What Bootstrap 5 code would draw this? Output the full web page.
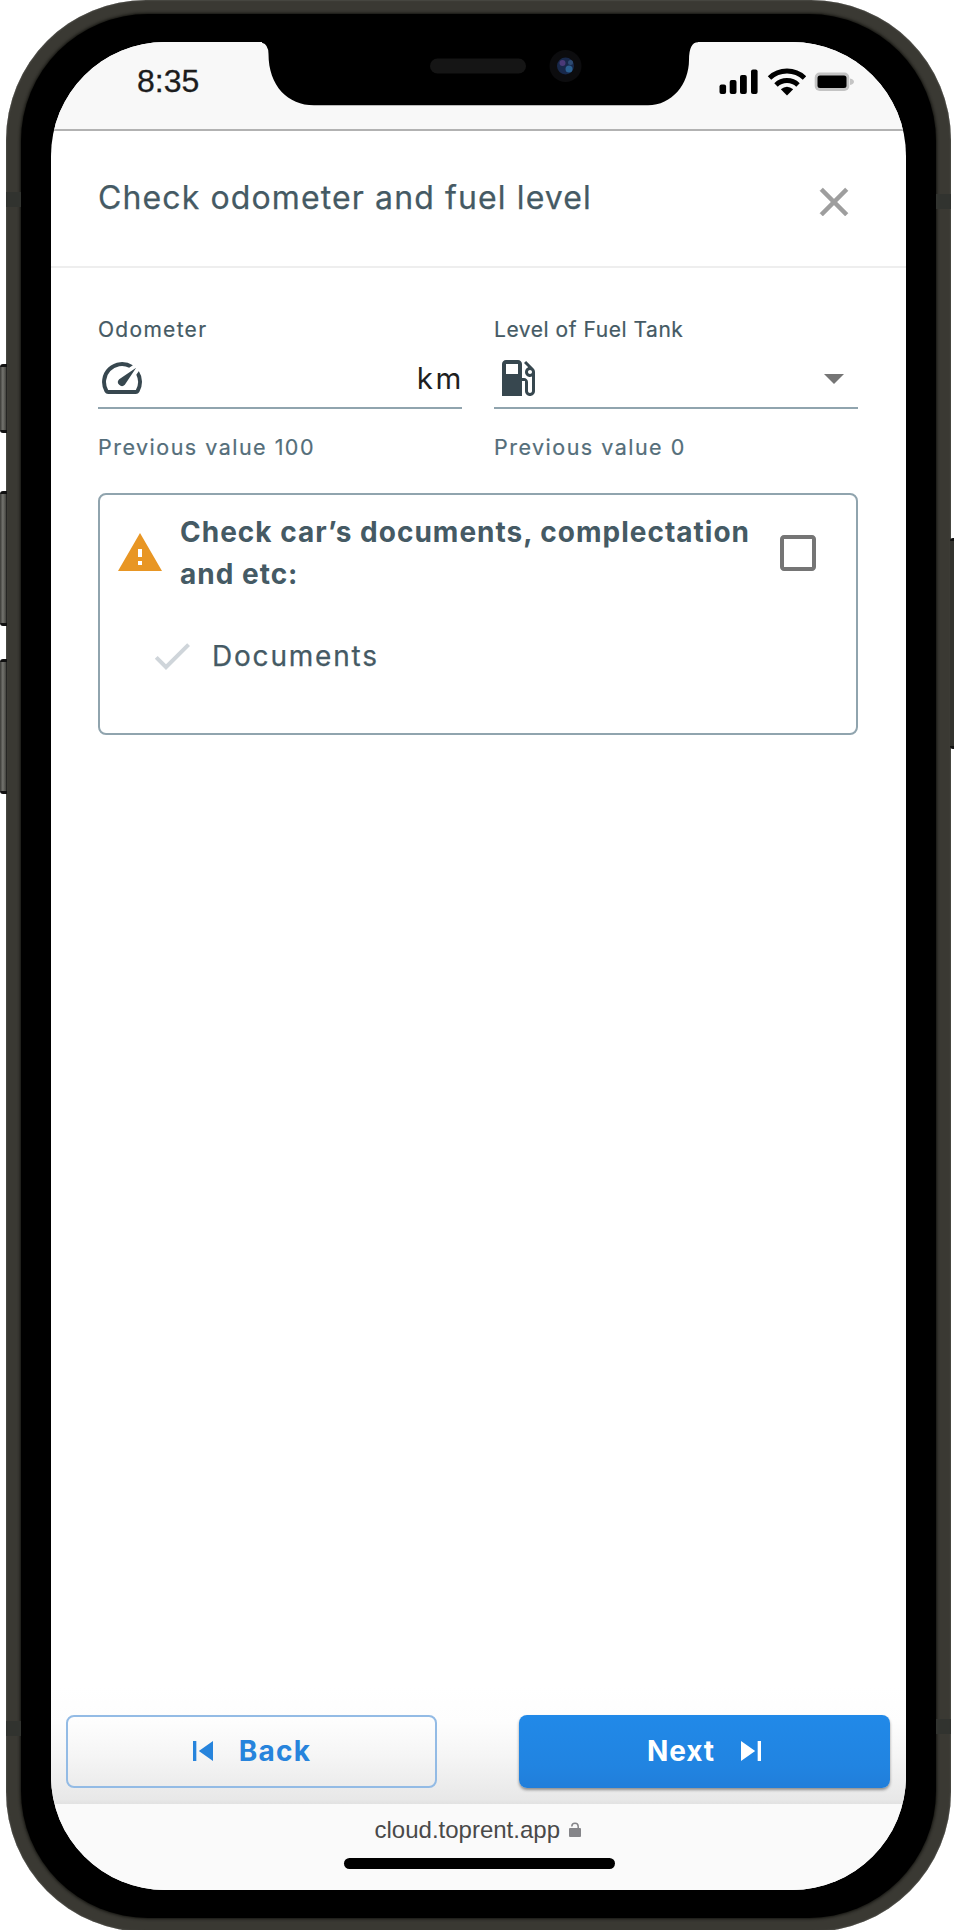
<!DOCTYPE html>
<html lang="en">
<head>
<meta charset="utf-8">
<meta name="viewport" content="width=device-width, initial-scale=1">
<title>Check odometer and fuel level</title>
<link href="https://cdn.jsdelivr.net/npm/bootstrap@5.3.0/dist/css/bootstrap.min.css" rel="stylesheet">
<style>
:root{--ink:#455a64;--line:#90a4ae;--blue:#2087e4}
body{font-family:Inter,"Open Sans",sans-serif;color:var(--ink);background:#fff;width:954px;height:1930px;overflow:hidden}
svg{display:block;flex:none}
.stage{width:954px;height:1930px}
/* phone body */
.phone{margin-left:6px;width:945px;height:1932px;border-radius:140px;background:#3a3933;padding:14px 15px;box-shadow:inset 0 0 2px #6d6d68}
.bezel{height:1904px;border-radius:127px;background:#000;padding:28px 30px 27px 29.5px;box-shadow:0 0 3px 1px #141410}
.screen{height:1847.5px;border-radius:114px;background:#fff;overflow:hidden}
.side-key{width:7px;background:linear-gradient(90deg,#3a3a36,#74746f 40%,#4a4a45 80%,#111);border-top:3px solid #111;border-bottom:3px solid #111;border-radius:3px 0 0 3px;left:0}
.key-mute{top:364px;height:69px}
.key-up{top:491px;height:135px}
.key-down{top:659px;height:135px}
.key-power{top:538px;height:211px;left:950px;width:6px;background:#33332e}
.seam{width:15px;height:15px;background:#31332f}
.notch{left:262px;top:40px}
/* status bar */
.status{height:89px;background:#f8f8f8;border-bottom:2px solid #b2b2b2;padding:21px 52.5px 0 86.5px}
.clock{font:400 32px/40px "Liberation Sans",Arial,sans-serif;color:#1c1c1c;margin-top:-2px;-webkit-text-stroke:.3px #1c1c1c}
/* dialog header */
.top{height:137px;border-bottom:2px solid #eee;padding:0 48px 0 47.5px}
.top h1{font-size:32px;line-height:40px;letter-spacing:1.12px;font-weight:400;margin-bottom:1px;-webkit-text-stroke:.25px currentColor}
.close-x{margin-top:7px;stroke:#9e9e9e;stroke-width:.3}
.content{padding:47px 48px 0 47.5px}
.pair{gap:32px}
.pair>div{flex:1 1 0}
.lbl{font-size:21px;line-height:30px;letter-spacing:1.3px;margin-bottom:-1px;-webkit-text-stroke:.2px currentColor}
.lbl-fuel{letter-spacing:.54px}
.field{height:65px;border-bottom:2px solid var(--line);padding-bottom:5px}
.unit{font-size:29.5px;line-height:40px;color:#1f1f1f;letter-spacing:2.6px;margin-right:-2px;margin-bottom:4px}
.hint{font-size:21.5px;line-height:30px;letter-spacing:1.48px;color:#546e7a;margin-top:23px;-webkit-text-stroke:.2px currentColor}
.panel{border:2px solid var(--line);border-radius:8px;height:242px;margin-top:31px;padding:16px 34px 0 16px}
.panel h2{font-size:28px;line-height:42px;font-weight:700;letter-spacing:1px;margin:0 0 0 16px;width:590px}
.docs{font-size:28px;line-height:40px;letter-spacing:1.8px;gap:16px;padding-left:32px;margin-top:37px;-webkit-text-stroke:.25px currentColor}
/* footer */
.actions{height:117px;padding:28px 16px 0 15.5px;background:linear-gradient(#fff 0,#fdfdfd 30%,#f5f5f5 60%,#e8e8e8 96%,#e2e2e2 100%)}
.act{width:371px;height:73px;border-radius:8px;border:2px solid transparent;font-size:28px;font-weight:700;padding:0 0 1px;gap:16px}
.act-back,.act-back:hover{border-color:#93bbe5;color:#2784dc;letter-spacing:1.2px;padding-right:9px}
.act-next,.act-next:hover{color:#fff;background:linear-gradient(#2189e8,#2184e1 70%,#217eda);border:0;box-shadow:0 2px 3px rgba(0,0,0,.4);letter-spacing:.9px;padding-left:9px}
.urlbar{background:#fafafa;height:86px;padding-top:10px}
.url{font:400 24px/32px "Liberation Sans",Arial,sans-serif;color:#494949;gap:8px}
.home{width:271px;height:11px;border-radius:6px;background:#000;margin-top:12px;margin-left:2px}
</style>
</head>
<body>
<div class="stage position-relative overflow-hidden">
  <i class="side-key key-mute position-absolute"></i>
  <i class="side-key key-up position-absolute"></i>
  <i class="side-key key-down position-absolute"></i>
  <i class="side-key key-power position-absolute"></i>
  <div class="phone">
    <div class="bezel">
      <main class="screen d-flex flex-column">
        <div class="status d-flex justify-content-between align-items-start flex-shrink-0">
          <span class="clock">8:35</span>
          <svg width="136" height="36" viewBox="0 0 136 36">
            <rect x="1.500" y="21.500" width="6.600" height="9.500" rx="2"/>
            <rect x="11.700" y="17" width="6.800" height="14" rx="2"/>
            <rect x="22" y="12" width="6.800" height="19" rx="2"/>
            <rect x="33" y="6.500" width="6.600" height="24.500" rx="2"/>
            <g fill="none" stroke="#000" stroke-width="5">
              <path d="M51.500 15a25.500 25.500 0 0 1 35 0"/>
              <path d="M58 22a16 16 0 0 1 22 0"/>
            </g>
            <path d="M62.800 26.300q6.200-5 12.400 0L69 32.600z"/>
            <rect x="96.700" y="9.500" width="34.600" height="18.500" rx="5" fill="#c4c4c4"/>
            <path d="M132 15.500q4 1 4 3.300t-4 3.200z" fill="#c4c4c4"/>
            <rect x="99.500" y="12.500" width="29" height="12.500" rx="2.500"/>
          </svg>
        </div>

        <header class="top d-flex justify-content-between align-items-center flex-shrink-0">
          <h1 class="text-nowrap">Check odometer and fuel level</h1>
          <svg class="close-x" width="48" height="48" viewBox="0 0 24 24" fill="#9e9e9e"><path d="M19 6.410 17.590 5 12 10.590 6.410 5 5 6.410 10.590 12 5 17.590 6.410 19 12 13.410 17.590 19 19 17.590 13.410 12z"/></svg>
        </header>

        <section class="content flex-grow-1">
          <div class="pair d-flex">
            <div>
              <div class="lbl">Odometer</div>
              <div class="field d-flex align-items-end justify-content-between">
                <svg width="48" height="48" viewBox="0 0 24 24" fill="#37474f"><path d="m20.380 8.570-1.230 1.850a8 8 0 0 1-.22 7.580H5.070A8 8 0 0 1 15.580 6.850l1.850-1.230A10 10 0 0 0 3.350 19a2 2 0 0 0 1.720 1h13.850a2 2 0 0 0 1.740-1 10 10 0 0 0-.27-10.440zm-9.790 6.840a2 2 0 0 0 2.830 0l5.660-8.490-8.490 5.660a2 2 0 0 0 0 2.830z"/></svg>
                <span class="unit">km</span>
              </div>
              <div class="hint">Previous value 100</div>
            </div>
            <div>
              <div class="lbl lbl-fuel">Level of Fuel Tank</div>
              <div class="field d-flex align-items-end justify-content-between">
                <svg width="48" height="48" viewBox="0 0 24 24" fill="#37474f"><path d="M19.770 7.230l.01-.01-3.720-3.720L15 4.560l2.110 2.110c-.94.36-1.610 1.260-1.610 2.330 0 1.380 1.120 2.500 2.500 2.500.36 0 .69-.08 1-.21v7.210c0 .55-.45 1-1 1s-1-.45-1-1V14c0-1.100-.9-2-2-2h-1V5c0-1.100-.9-2-2-2H6c-1.100 0-2 .9-2 2v16h10v-7.500h1.500v5c0 1.380 1.120 2.500 2.500 2.500s2.500-1.120 2.500-2.500V9c0-.69-.28-1.320-.73-1.770zM12 10H6V5h6v5zm6 0c-.55 0-1-.45-1-1s.45-1 1-1 1 .45 1 1-.45 1-1 1z"/></svg>
                <svg width="48" height="48" viewBox="0 0 24 24" fill="#757575"><path d="M7 10l5 5 5-5z"/></svg>
              </div>
              <div class="hint">Previous value 0</div>
            </div>
          </div>

          <div class="panel">
            <div class="d-flex align-items-center">
              <svg width="48" height="48" viewBox="0 0 24 24" fill="#e89624"><path d="M1 21h22L12 2 1 21zm12-3h-2v-2h2v2zm0-4h-2v-4h2v4z"/></svg>
              <h2>Check car’s documents, complectation<br>and etc:</h2>
              <svg class="ms-auto me-n1" width="48" height="48" viewBox="0 0 24 24" fill="#757575"><path d="M19 5v14H5V5h14m0-2H5c-1.100 0-2 .9-2 2v14c0 1.100.9 2 2 2h14c1.100 0 2-.9 2-2V5c0-1.100-.9-2-2-2z"/></svg>
            </div>
            <div class="docs d-flex align-items-center">
              <svg width="48" height="48" viewBox="0 0 24 24" fill="#cfd5da"><path d="M9 16.170 4.830 12l-1.420 1.410L9 19 21 7l-1.410-1.410z"/></svg>
              <span>Documents</span>
            </div>
          </div>
        </section>

        <footer class="actions d-flex justify-content-between align-items-start flex-shrink-0">
          <button class="act act-back btn d-flex align-items-center justify-content-center">
            <svg width="40" height="40" viewBox="0 0 24 24" fill="currentColor"><path d="M6 6h2v12H6zm3.500 6 8.500 6V6z"/></svg>Back
          </button>
          <button class="act act-next btn d-flex align-items-center justify-content-center">
            Next<svg width="40" height="40" viewBox="0 0 24 24" fill="currentColor"><path d="M6 18l8.500-6L6 6v12zM16 6v12h2V6h-2z"/></svg>
          </button>
        </footer>

        <div class="urlbar d-flex flex-column align-items-center flex-shrink-0">
          <div class="url d-flex align-items-center justify-content-center">
            <span>cloud.toprent.app</span>
            <svg width="14" height="18" viewBox="0 0 14 18"><rect x="1" y="7" width="12" height="9" rx="1" fill="#858589"/><path d="M3.800 5.500a3.200 3.200 0 0 1 6.400 0v2" fill="none" stroke="#858589" stroke-width="1.500"/></svg>
          </div>
          <div class="home"></div>
        </div>
      </main>
    </div>
  </div>
  <i class="seam position-absolute" style="left:6px;top:192px"></i>
  <i class="seam position-absolute" style="left:936px;top:194px"></i>
  <i class="seam position-absolute" style="left:6px;top:1721px"></i>
  <i class="seam position-absolute" style="left:936px;top:1719px"></i>
  <svg class="notch position-absolute" width="436" height="68" viewBox="262 40 436 68">
    <path d="M258 38V42.300H260Q268.500 43 268.500 54C268.500 86 288 105.300 314 105.300H648C672 105.300 689 84 689 60Q689 42.300 698 42.300V38z"/>
    <rect x="430" y="58.500" width="96" height="15" rx="7.500" fill="#151515"/>
    <circle cx="565.500" cy="66" r="16" fill="#0c0c0e"/>
    <circle cx="565.500" cy="66" r="8.500" fill="#18284a"/>
    <circle cx="562.500" cy="63" r="3" fill="#4b3a78"/>
    <circle cx="569" cy="69" r="3.500" fill="#2b6090"/>
    <circle cx="570.500" cy="62.500" r="2.500" fill="#2d4a72"/>
  </svg>
</div>
<script src="https://cdn.jsdelivr.net/npm/bootstrap@5.3.0/dist/js/bootstrap.bundle.min.js"></script>
</body>
</html>
